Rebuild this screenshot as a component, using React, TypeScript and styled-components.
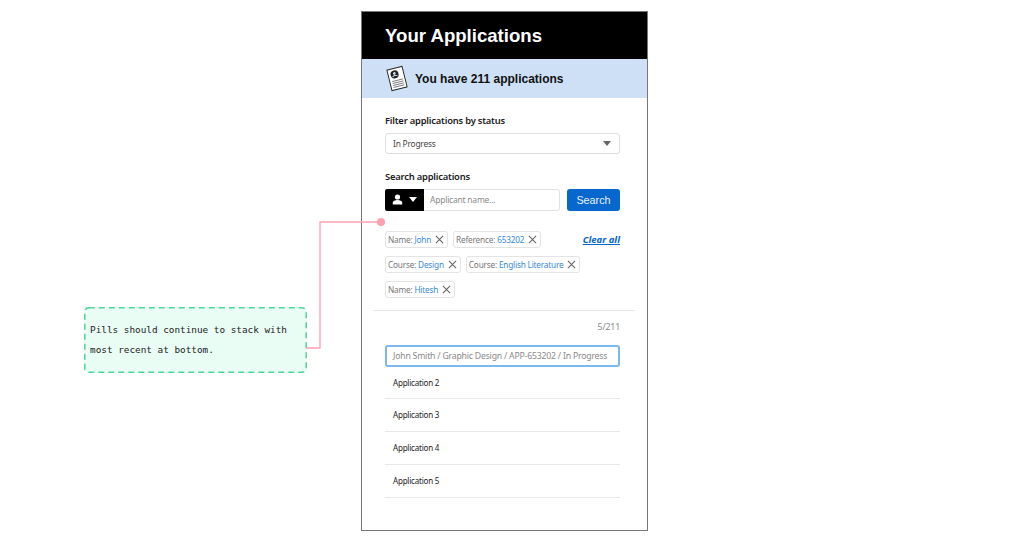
import React from 'react';
import styled, { createGlobalStyle } from 'styled-components';

const GlobalStyle = createGlobalStyle`
  html, body {
    margin: 0;
    padding: 0;
    background: #fff;
    overflow: hidden;
  }
  * {
    box-sizing: border-box;
  }
`;

const Canvas = styled.div`
  position: relative;
  width: 1018px;
  height: 544px;
  padding: 11px 0 0 361px;
  font-family: 'Noto Sans', 'Open Sans', sans-serif;
  letter-spacing: -0.2px;
`;

const Phone = styled.div`
  width: 287px;
  height: 520px;
  border: 1px solid #777;
  border-bottom-width: 1.5px;
  display: flex;
  flex-direction: column;
`;

const Header = styled.header`
  background: #000;
  height: 47px;
  padding-left: 23px;
  display: flex;
  align-items: center;
`;

const Title = styled.h1`
  margin: 0;
  color: #fff;
  letter-spacing: 0;
  font: bold 18.6px 'Liberation Sans', Arial, sans-serif;
`;

const Banner = styled.div`
  background: #cde0f5;
  height: 39px;
  padding-left: 24px;
  display: flex;
  align-items: center;
  gap: 7px;
`;

const BannerText = styled.span`
  letter-spacing: 0;
  font: bold 12px 'Liberation Sans', Arial, sans-serif;
  color: #111;
`;

const Content = styled.div`
  padding: 16px 27px 0 23px;
  display: flex;
  flex-direction: column;
`;

const Label = styled.label`
  display: block;
  font-size: 9.4px;
  line-height: 14px;
  font-weight: 600;
  color: #1a1a1a;
  margin-bottom: 5px;
`;

const Select = styled.div`
  height: 21px;
  margin-right: 0.5px;
  border: 1px solid #dedede;
  border-radius: 3px;
  padding: 0 8px 0 7px;
  margin-bottom: 16px;
  display: flex;
  align-items: center;
  justify-content: space-between;
  font-size: 8.4px;
  color: #444;
`;

const Caret = styled.span<{ $color: string }>`
  width: 0;
  height: 0;
  border-left: 4px solid transparent;
  border-right: 4px solid transparent;
  border-top: 5px solid ${(p) => p.$color};
`;

const SearchRow = styled.div`
  display: flex;
  height: 21.5px;
  margin-bottom: 20px;
`;

const SearchType = styled.div`
  width: 39px;
  background: #000;
  border-radius: 2px 0 0 2px;
  display: flex;
  align-items: center;
  justify-content: center;
  gap: 6px;
`;

const SearchInput = styled.div`
  width: 136px;
  border: 1px solid #e2e2e2;
  border-left: 0;
  border-radius: 0 3px 3px 0;
  padding-left: 6px;
  display: flex;
  align-items: center;
  font-size: 8.45px;
  color: #8a8a8a;
`;

const SearchButton = styled.button`
  width: 53px;
  margin-left: 7px;
  padding: 0;
  border: 0;
  border-radius: 3px;
  background: #0667cd;
  color: #e8f1fb;
  font: 10.8px 'Liberation Sans', Arial, sans-serif;
`;

const PillRow = styled.div`
  display: flex;
  align-items: center;
  gap: 5px;
  height: 17px;
  margin-bottom: 8px;
`;

const Pill = styled.div`
  height: 17px;
  border: 1px solid #e3e3e3;
  border-radius: 3px;
  padding: 0 3px 0 2px;
  display: flex;
  align-items: center;
  gap: 4px;
  font-size: 8.25px;
  color: #777;
  white-space: nowrap;
`;

const PillValue = styled.span`
  color: #3a8ad8;
`;

const ClearAll = styled.a`
  margin-left: auto;
  font-size: 9.5px;
  letter-spacing: 0;
  font-weight: 700;
  font-style: italic;
  color: #0667cd;
  text-decoration: underline;
`;

const Divider = styled.hr`
  margin: 4.5px -15px 0 -12px;
  border: 0;
  border-top: 1px solid #e8e8e8;
`;

const Count = styled.div`
  margin-top: 9px;
  text-align: right;
  font-size: 8.8px;
  line-height: 14px;
  color: #888;
`;

const FocusedRow = styled.div`
  margin: 10.5px 0.5px 0 -0.5px;
  height: 22px;
  border: 2px solid #7ab8f0;
  border-radius: 3px;
  padding-left: 6.5px;
  display: flex;
  align-items: center;
  font-size: 8.7px;
  color: #8a8a8a;
  white-space: nowrap;
`;

const AppRow = styled.div<{ $first?: boolean }>`
  height: ${(p) => (p.$first ? 32 : 33)}px;
  margin-right: 0.5px;
  border-bottom: 1px solid #e9e9e9;
  padding-left: 8px;
  display: flex;
  align-items: center;
  font-size: 8px;
  color: #222;
`;

const Note = styled.div`
  position: absolute;
  left: 83.5px;
  top: 306.5px;
  width: 223px;
  height: 66px;
  padding: 13.5px 0 0 6.5px;
  background: #e9fdf5;
  border-radius: 4px;
  letter-spacing: 0;
  font-family: 'DejaVu Sans Mono', 'Liberation Mono', monospace;
  font-size: 9.35px;
  line-height: 20px;
  color: #222;
  white-space: nowrap;
`;

const NoteBorder = styled.svg`
  position: absolute;
  left: 0;
  top: 0;
`;

const Connector = styled.svg`
  position: absolute;
  left: 0;
  top: 0;
  pointer-events: none;
`;

const Close = () => (
  <svg width="9" height="9" viewBox="0 0 10 10">
    <path d="M1 1 9 9M9 1 1 9" stroke="#666" strokeWidth="1.2" fill="none" />
  </svg>
);

const UserIcon = () => (
  <svg width="11" height="11" viewBox="0 0 11 11">
    <circle cx="5.5" cy="3" r="2.6" fill="#fff" />
    <path d="M.8 10.5V8.6C.8 7 3 6.1 5.5 6.1s4.7.9 4.7 2.5v1.9z" fill="#fff" />
  </svg>
);

const ApplicationIcon = () => (
  <svg width="22" height="27" viewBox="0 0 24 28">
    <g transform="rotate(-14 12 14)">
      <rect x="3.5" y="2.5" width="17" height="23" fill="#fff" stroke="#222" strokeWidth="1" />
      <circle cx="10.5" cy="9" r="4.4" fill="#222" />
      <circle cx="10.5" cy="8" r="1.5" fill="#cde0f5" />
      <path d="M7.8 11.4c.6-1.5 4.8-1.5 5.4 0" stroke="#cde0f5" strokeWidth="1" fill="none" />
      <path d="M6 16h12M6 18.2h12M6 20.4h12M6 22.6h12" stroke="#444" strokeWidth=".7" />
    </g>
  </svg>
);

const pillRows = [
  [
    { label: 'Name', value: 'John' },
    { label: 'Reference', value: '653202' },
  ],
  [
    { label: 'Course', value: 'Design' },
    { label: 'Course', value: 'English Literature' },
  ],
  [{ label: 'Name', value: 'Hitesh' }],
];

const App = (): JSX.Element => (
  <Canvas>
    <GlobalStyle />
    <Phone>
      <Header>
        <Title>Your Applications</Title>
      </Header>
      <Banner>
        <ApplicationIcon />
        <BannerText>You have 211 applications</BannerText>
      </Banner>
      <Content>
        <Label>Filter applications by status</Label>
        <Select>
          In Progress
          <Caret $color="#666" />
        </Select>
        <Label>Search applications</Label>
        <SearchRow>
          <SearchType>
            <UserIcon />
            <Caret $color="#fff" />
          </SearchType>
          <SearchInput>Applicant name...</SearchInput>
          <SearchButton>Search</SearchButton>
        </SearchRow>
        {pillRows.map((row, index) => (
          <PillRow key={index}>
            {row.map((pill) => (
              <Pill key={pill.value}>
                <span>
                  {pill.label}: <PillValue>{pill.value}</PillValue>
                </span>
                <Close />
              </Pill>
            ))}
            {index === 0 && <ClearAll>Clear all</ClearAll>}
          </PillRow>
        ))}
        <Divider />
        <Count>5/211</Count>
        <FocusedRow>John Smith / Graphic Design / APP-653202 / In Progress</FocusedRow>
        <AppRow $first>Application 2</AppRow>
        <AppRow>Application 3</AppRow>
        <AppRow>Application 4</AppRow>
        <AppRow>Application 5</AppRow>
      </Content>
    </Phone>
    <Note>
      <NoteBorder width="223" height="66">
        <rect
          x="0.8"
          y="0.8"
          width="221.4"
          height="64.4"
          rx="4"
          fill="none"
          stroke="#4ed69b"
          strokeWidth="1.5"
          strokeDasharray="6 4"
        />
      </NoteBorder>
      Pills should continue to stack with
      <br />
      most recent at bottom.
    </Note>
    <Connector width="1018" height="544">
      <path d="M306 348H320V222H381" fill="none" stroke="#ffa0b0" strokeWidth="1.3" />
      <circle cx="381" cy="222" r="4" fill="#ffa0b0" />
    </Connector>
  </Canvas>
);

export default App;
